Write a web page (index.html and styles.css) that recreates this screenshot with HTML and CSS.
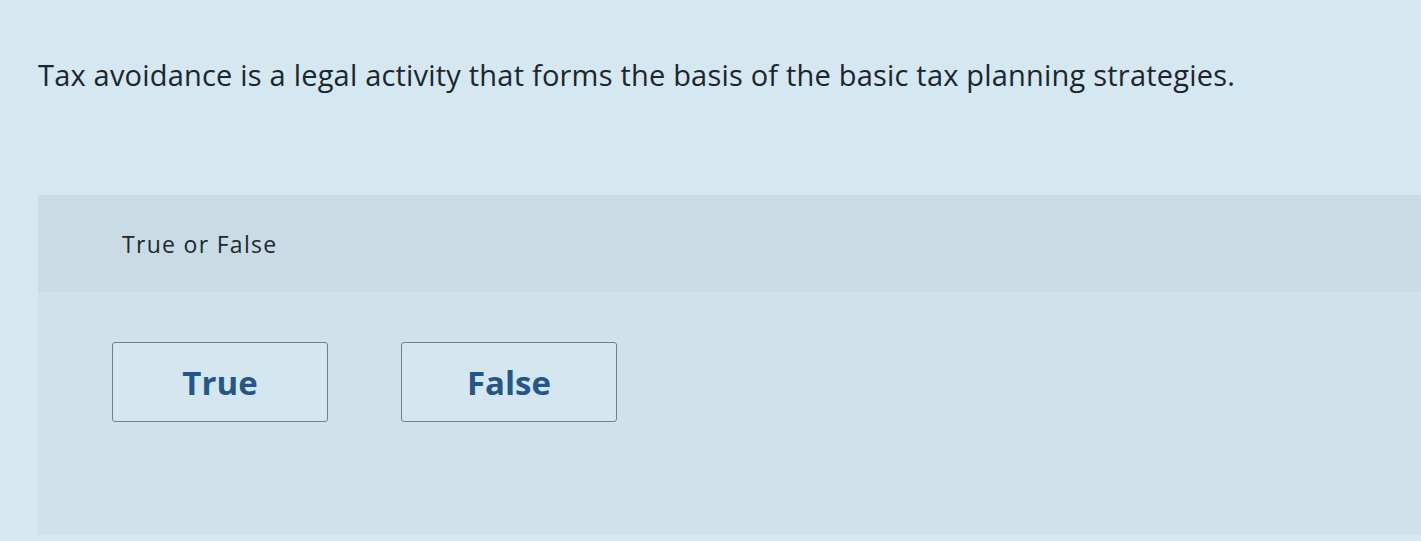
FILE: index.html
```html
<!DOCTYPE html>
<html lang="en">
<head>
  <meta charset="UTF-8" />
  <title>Question</title>
  <link rel="stylesheet" href="styles.css">
</head>
<body>

  <p class="question">Tax avoidance is a legal activity that forms the basis of the basic tax planning strategies.</p>

  <div class="answer-panel">
    <div class="answer-head">True or False</div>
    <div class="answer-choices">
      <button class="choice">True</button>
      <button class="choice">False</button>
    </div>
  </div>

</body>
</html>
```

FILE: styles.css
```css
body {
  font-family: "Open Sans", Lato, Arial, sans-serif;
  background: #d5e7f1;
  color: #1f2a30;
  margin: 0;
  padding: 0 0 6px 38px;
  overflow: hidden;
}

.question {
  margin: 0;
  padding-top: 58px;
  font-size: 29px;
  line-height: 34px;
  letter-spacing: 0.2px;
  color: #1c262c;
}

.answer-panel {
  margin-top: 103px;
  background: #cfe2ec;
  height: 340px;
}

.answer-head {
  background: #c9dbe4;
  height: 97px;
  display: flex;
  align-items: center;
  padding-left: 84px;
  font-size: 23px;
  letter-spacing: 1.3px;
  color: #1e282d;
}

.answer-choices {
  display: flex;
  gap: 73px;
  padding: 50px 0 0 74px;
}

.choice {
  width: 216px;
  height: 80px;
  background: #d4e7f1;
  border: 1.5px solid #6f818d;
  border-radius: 3px;
  font-family: inherit;
  font-size: 33px;
  font-weight: bold;
  color: #23578c;
  cursor: pointer;
}
```
